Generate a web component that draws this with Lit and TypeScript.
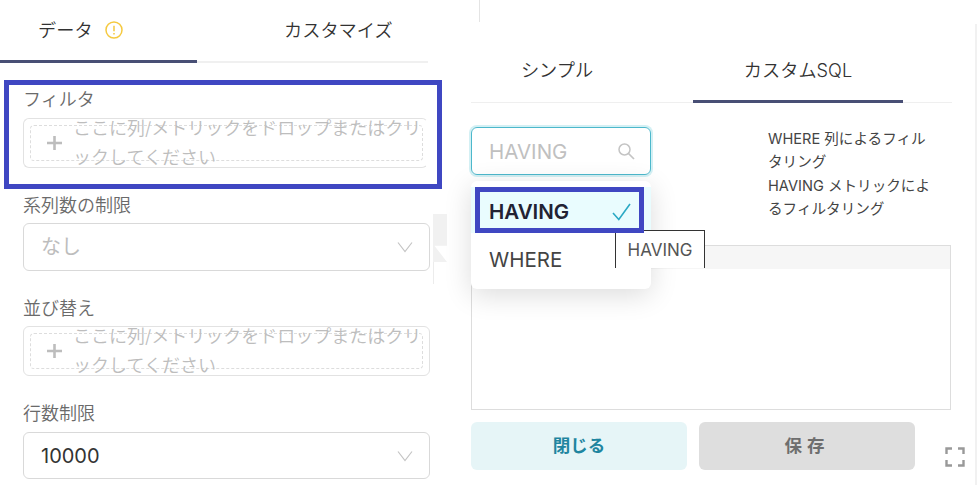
import { LitElement, html, css } from "lit";
import { customElement } from "lit/decorators.js";

const chevron = html`<svg class="chev" width="16" height="12" viewBox="0 0 16 12"><path d="M1 1.500 8 10.500 15 1.500" fill="none" stroke="#c4c4c4" stroke-width="1.2"/></svg>`;
const DROP = "ここに列/メトリックをドロップまたはクリックしてください";

@customElement("app-root")
export class AppRoot extends LitElement {
  static styles = css`
    :host { display: block; width: 979px; height: 485px; position: relative; overflow: hidden; background: #fff;
      font-family: Inter, "Noto Sans CJK JP", sans-serif; color: #333; }
    * { box-sizing: border-box; }
    .page { display: grid; grid-template-columns: 433px 546px; height: 485px; }
    .left { padding-right: 3px; }
    .tabs { display: flex; height: 63px; width: 428px; border-bottom: 2px solid #f0f0f0; }
    .tab { font-size: 18.200px; line-height: 24px; padding-top: 18px; color: #323232; position: relative; margin-bottom: -2px; font-weight: 350; }
    .tab.on::after { content: ""; position: absolute; left: 0; right: 0; bottom: 0; height: 3px; background: #484f75; }
    .t1 { width: 197px; padding-left: 38px; display: flex; gap: 12px; }
    .t2 { padding-left: 87px; }
    .warn { margin-top: 3px; }
    .fields { padding: 25px 0 0 23px; display: flex; flex-direction: column; width: 430px; }
    .label { font-size: 18px; line-height: 24px; color: #6a6a6a; height: 22px; font-weight: 350; }
    .drop { height: 50px; margin-top: 7px; border: 1px solid #e2e2e2; border-radius: 6px; padding: 6px; }
    .filter { margin-top: 8px; margin-right: 2px; padding-right: 4px; border-right-color: transparent; }
    .dash { height: 36px; border: 1px dashed #ddd; border-radius: 4px; display: flex; align-items: center; padding-left: 15px; gap: 10px; }
    .dash svg { flex: none; }
    .drop-text { flex: none; font-size: 18px; line-height: 29px; color: #bdbdbd; width: 350px; white-space: normal; word-break: break-all; font-weight: 350; }
    .select { height: 48px; margin-top: 7px; border: 1px solid #d9d9d9; border-radius: 6px; display: flex; align-items: center; justify-content: space-between; padding: 0 16px 0 17px; font-size: 20px; }
    .select.ph { color: #bdbdbd; padding-bottom: 3px; }
    .select.ph svg { margin-top: 3px; }
    .select.val { color: #333; height: 47px; margin-top: 8px; }
    .g1, .g2, .g3 { margin-top: 26px; }
    .right { position: relative; padding: 0 0 0 38px; }
    .rtabs { display: flex; height: 103px; width: 481px; border-bottom: 1px solid #efefef; }
    .rtab { font-size: 18.200px; line-height: 24px; padding-top: 58px; color: #323232; position: relative; text-align: center; font-weight: 350; }
    .r1 { width: 222px; padding-right: 50px; }
    .r2 { width: 210px; }
    .r2::after { content: ""; position: absolute; left: 0; right: 0; bottom: -1px; height: 3px; background: #484f75; }
    .row { display: flex; margin-top: 24px; height: 118px; }
    .search { width: 180px; height: 48px; border: 1px solid #4db8cc; border-radius: 6px; box-shadow: 0 0 0 2px #d3f0f4; display: flex; align-items: center; justify-content: space-between; padding: 0 15px 0 17px; font-size: 20.500px; color: #c0c0c0; }
    .help { margin-left: 117px; width: 168px; font-size: 14.600px; line-height: 23.400px; color: #444; font-weight: 400; padding-top: 1px; }
    .editor { width: 480px; height: 165px; border: 1px solid #ddd; }
    .ehead { height: 23px; background: #f6f6f6; }
    .actions { display: flex; gap: 12px; margin-top: 12px; width: 444px; }
    .btn { flex: 1; height: 48px; border-radius: 6px; display: flex; align-items: center; justify-content: center; font-size: 17.500px; font-weight: 700; padding-bottom: 3px; }
    .close { background: #e6f5f7; color: #1f85a0; }
    .save { background: #dedede; color: #6e6e6e; letter-spacing: 5px; }
    .full { position: absolute; left: 512px; top: 447px; }
    .menu { position: absolute; left: 38px; top: 181px; width: 180px; height: 108px; background: #fff; border-radius: 6px; box-shadow: 0 6px 28px rgba(0,0,0,.14); padding-top: 6px; font-size: 20.500px; color: #444; }
    .opt { height: 46px; display: flex; align-items: center; justify-content: space-between; padding: 0 20px 0 18px; }
    .opt.sel { background: #e9fcfe; font-weight: 600; color: #223; padding-top: 3px; }
    .opt.plain { height: 50px; padding-top: 2px; }
    .tip { position: absolute; left: 182px; top: 230px; width: 90px; height: 38px; border: 1px solid #333; border-bottom: 0; background: #fff; font-size: 17px; color: #555; display: flex; align-items: center; justify-content: center; }
    .mark { position: absolute; border: 5px solid #3f47c2; pointer-events: none; }
    .mark.a { left: 4px; top: 80px; width: 438px; height: 109px; }
    .mark.b { left: 475px; top: 187px; width: 169px; height: 46px; }
    .vline { position: absolute; left: 479px; top: 0; width: 1px; height: 22px; background: #e4e4e4; }
    .rline { position: absolute; left: 975px; top: 24px; width: 2px; bottom: 0; background: #f1f1f1; }
    .gutter { position: absolute; left: 433px; top: 214px; width: 14px; height: 48px; background: #f1f1f1; clip-path: polygon(0 0, 100% 0, 100% 66%, 10% 66%, 100% 100%, 0 100%); }
    .gline { position: absolute; left: 433px; top: 214px; width: 1px; height: 70px; background: #ececec; }
  `;

  private drop() {
    return html`<div class="dash">
      <svg width="17" height="16" viewBox="0 0 17 16"><path d="M8.500 1v14M1 8h15" stroke="#bdbdbd" stroke-width="2.600"/></svg>
      <div class="drop-text">${DROP}</div>
    </div>`;
  }

  render() {
    return html`
      <div class="page">
        <div class="left">
          <div class="tabs">
            <div class="tab on t1">データ
              <svg class="warn" width="18" height="18" viewBox="0 0 18 18"><circle cx="9" cy="9" r="8" fill="none" stroke="#f5c93f" stroke-width="1.500"/><path d="M9 4.800v5.400M9 12v1.600" stroke="#f5c93f" stroke-width="1.500"/></svg>
            </div>
            <div class="tab t2">カスタマイズ</div>
          </div>
          <div class="fields">
            <div class="label">フィルタ</div>
            <div class="drop filter">${this.drop()}</div>
            <div class="label g1">系列数の制限</div>
            <div class="select ph"><span>なし</span>${chevron}</div>
            <div class="label g2">並び替え</div>
            <div class="drop">${this.drop()}</div>
            <div class="label g3">行数制限</div>
            <div class="select val"><span>10000</span>${chevron}</div>
          </div>
        </div>
        <div class="right">
          <div class="rtabs">
            <div class="rtab r1">シンプル</div>
            <div class="rtab r2">カスタムSQL</div>
          </div>
          <div class="row">
            <div class="search"><span>HAVING</span>
              <svg width="18" height="18" viewBox="0 0 18 18"><circle cx="7.500" cy="7.500" r="5.500" fill="none" stroke="#c4c4c4" stroke-width="1.500"/><path d="M11.500 11.500 17 17" stroke="#c4c4c4" stroke-width="1.700"/></svg>
            </div>
            <div class="help">WHERE 列によるフィルタリング<br>HAVING メトリックによるフィルタリング</div>
          </div>
          <div class="editor"><div class="ehead"></div></div>
          <div class="actions">
            <div class="btn close">閉じる</div>
            <div class="btn save">保存</div>
          </div>
          <svg class="full" width="20" height="20" viewBox="0 0 20 20"><path d="M1.500 7V1.500H7M13 1.500h5.500V7M18.500 13v5.500H13M7 18.500H1.500V13" fill="none" stroke="#999" stroke-width="2.400"/></svg>
          <div class="menu">
            <div class="opt sel"><span>HAVING</span><svg width="19" height="18" viewBox="0 0 19 18"><path d="M1 10 6.800 16.500 18 1" fill="none" stroke="#2aa9c4" stroke-width="1.600"/></svg></div>
            <div class="opt plain"><span>WHERE</span></div>
          </div>
          <div class="tip">HAVING</div>
        </div>
      </div>
      <div class="vline"></div>
      <div class="rline"></div>
      <div class="gline"></div>
      <div class="gutter"></div>
      <div class="mark a"></div>
      <div class="mark b"></div>
    `;
  }
}
